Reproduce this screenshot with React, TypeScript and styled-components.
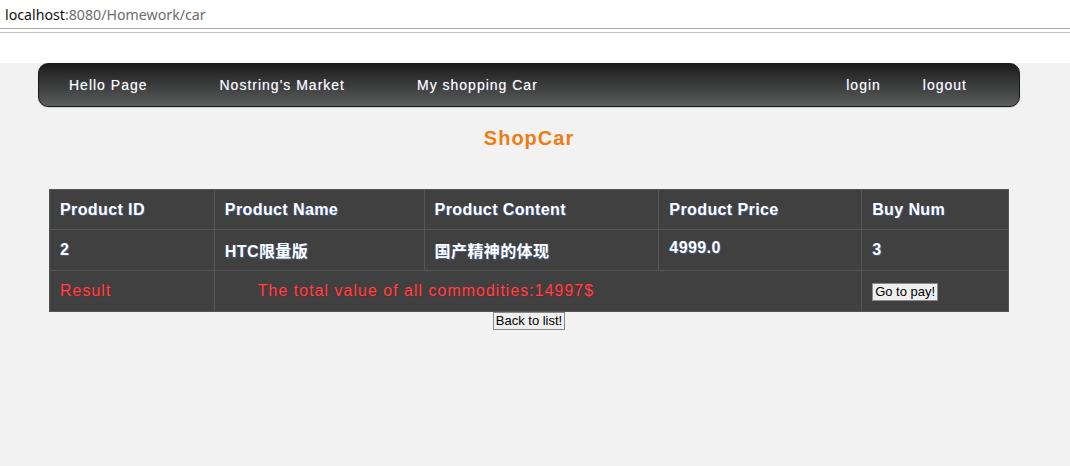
import React, { FC } from 'react'
import styled, { createGlobalStyle } from 'styled-components'

const GlobalStyle = createGlobalStyle`
  html, body {
    margin: 0;
    padding: 0;
    background: #f2f2f2;
    font-family: "Liberation Sans", Arial, sans-serif;
  }
`

const AddressBar = styled.div`
  height: 28px;
  background: #fff;
  border-bottom: 1px solid #a8a8a8;
  padding-left: 5px;
  display: flex;
  align-items: center;
  font-family: "Noto Sans", "Open Sans", sans-serif;
  font-size: 14.2px;
  color: #111;
`

const Host = styled.span`
  color: #111;
`

const UrlRest = styled.span`
  color: #6d6d6d;
`

const ToolStrip = styled.div`
  background: #fff;
  padding-top: 3px;
`

const ToolLine = styled.div`
  height: 30px;
  border-top: 1px solid #c4c4c4;
  background: #fff;
`

const Page = styled.div`
  width: 1058px;
`

const Nav = styled.nav`
  margin: 0 38px;
  height: 42px;
  border: 1px solid #1a1a1a;
  border-radius: 10px;
  background: linear-gradient(to bottom, #1c1c1c 0%, #3a3b3b 50%, #5c5e5d 100%);
  display: flex;
  align-items: center;
  justify-content: space-between;
  box-shadow: 0 1px 1px rgba(0, 0, 0, 0.15);
`

const NavGroup = styled.ul<{ $gap: number; $left?: number; $right?: number }>`
  list-style: none;
  margin: 0;
  padding: 0 ${(p) => p.$right || 0}px 0 ${(p) => p.$left || 0}px;
  display: flex;
  gap: ${(p) => p.$gap}px;
`

const NavItem = styled.li`
  color: #fff;
  font-size: 14px;
  letter-spacing: 1px;
  text-shadow: 0 0 1px rgba(160, 160, 200, 0.7);
`

const Title = styled.h2`
  margin: 19px 0 39px;
  text-align: center;
  color: #f07d14;
  font-size: 20px;
  line-height: 24px;
  font-weight: bold;
  letter-spacing: 1px;
`

const Table = styled.table`
  width: 960px;
  margin: 0 auto;
  border-collapse: collapse;
  background: #404040;
`

const Cell = styled.td<{ $red?: boolean; $raised?: boolean; $indent?: number; $h?: number }>`
  height: ${(p) => p.$h || 40}px;
  padding: ${(p) => (p.$raised ? '0 0 4px' : '0 0 0')} ${(p) => p.$indent || 10}px;
  border: 1px solid #555555;
  vertical-align: middle;
  font-size: 16px;
  font-weight: ${(p) => (p.$red ? 'normal' : 'bold')};
  letter-spacing: ${(p) => (p.$red ? '1px' : '0.4px')};
  color: ${(p) => (p.$red ? '#ff4545' : '#ffffff')};
  font-family: "Liberation Sans", Arial, "Noto Sans CJK SC", sans-serif;
  text-shadow: ${(p) =>
    p.$red ? '1px 1px 1px rgba(120, 30, 40, 0.8)' : '1px 1px 1px rgba(70, 100, 150, 0.9)'};
  box-sizing: border-box;
`

const PlainButton = styled.button`
  font-family: "Liberation Sans", Arial, sans-serif;
  font-size: 13px;
  line-height: 14px;
  padding: 1px 2px;
  color: #000;
  background: #efefef;
  border: 1px solid #8a8a8a;
  border-radius: 0;
`

const Footer = styled.div`
  display: flex;
  justify-content: center;
`

const columns = [
  { label: 'Product ID', width: 165 },
  { label: 'Product Name', width: 210 },
  { label: 'Product Content', width: 235 },
  { label: 'Product Price', width: 203 },
  { label: 'Buy Num', width: 147 },
]

const rows = [{ id: '2', name: 'HTC限量版', content: '国产精神的体现', price: '4999.0', num: '3' }]

const App: FC = () => {
  const total = rows.reduce((s, r) => s + parseFloat(r.price) * parseInt(r.num, 10), 0)

  return (
    <>
      <GlobalStyle />
      <AddressBar>
        <Host>localhost</Host>
        <UrlRest>:8080/Homework/car</UrlRest>
      </AddressBar>
      <ToolStrip>
        <ToolLine />
      </ToolStrip>
      <Page>
        <Nav>
          <NavGroup $gap={72} $left={30}>
            <NavItem>Hello Page</NavItem>
            <NavItem>Nostring's Market</NavItem>
            <NavItem>My shopping Car</NavItem>
          </NavGroup>
          <NavGroup $gap={42} $right={52}>
            <NavItem>login</NavItem>
            <NavItem>logout</NavItem>
          </NavGroup>
        </Nav>
        <Title>ShopCar</Title>
        <Table>
          <colgroup>
            {columns.map((c) => (
              <col key={c.label} style={{ width: c.width }} />
            ))}
          </colgroup>
          <tbody>
            <tr>
              {columns.map((c) => (
                <Cell as="th" key={c.label} style={{ textAlign: 'left' }}>
                  {c.label}
                </Cell>
              ))}
            </tr>
            {rows.map((r) => (
              <tr key={r.id}>
                <Cell $h={41}>{r.id}</Cell>
                <Cell $h={41}>{r.name}</Cell>
                <Cell $h={41}>{r.content}</Cell>
                <Cell $h={41} $raised>
                  {r.price}
                </Cell>
                <Cell $h={41}>{r.num}</Cell>
              </tr>
            ))}
            <tr>
              <Cell $h={41} $red>
                Result
              </Cell>
              <Cell $h={41} $red $indent={43} colSpan={3}>
                The total value of all commodities:{total}$
              </Cell>
              <Cell $h={41}>
                <PlainButton>Go to pay!</PlainButton>
              </Cell>
            </tr>
          </tbody>
        </Table>
        <Footer>
          <PlainButton>Back to list!</PlainButton>
        </Footer>
      </Page>
    </>
  )
}

export default App
